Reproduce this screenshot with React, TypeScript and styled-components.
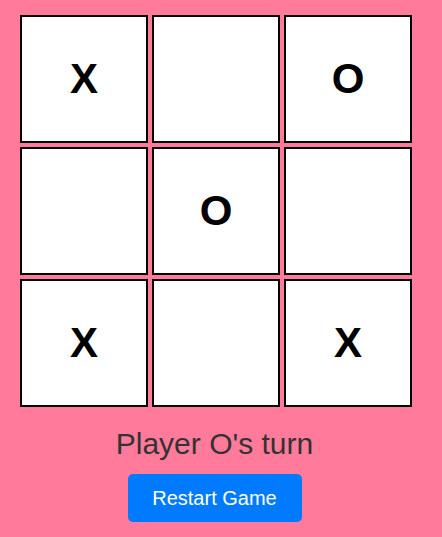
import styled, { createGlobalStyle } from "styled-components";
import { useState } from "react";

const GlobalStyle = createGlobalStyle`
  html, body {
    margin: 0;
    padding: 0;
    background-color: #ff7a9b;
    font-family: "Liberation Sans", Arial, sans-serif;
  }
`;

const Page = styled.div`
  min-height: 537px;
  padding: 15px 0 0 20px;
  box-sizing: border-box;
`;

const Game = styled.div`
  width: 392px;
  display: flex;
  flex-direction: column;
  align-items: center;
`;

const Board = styled.div`
  display: grid;
  grid-template-columns: repeat(3, 128px);
  grid-auto-rows: 128px;
  gap: 4px;
`;

const Cell = styled.button`
  box-sizing: border-box;
  width: 128px;
  height: 128px;
  padding: 0;
  background-color: #ffffff;
  border: 2px solid #000000;
  font-family: "Liberation Sans", Arial, sans-serif;
  font-size: 42px;
  font-weight: 700;
  color: #000000;
  cursor: pointer;
  display: flex;
  align-items: center;
  justify-content: center;
`;

const Status = styled.div`
  margin-top: 20px;
  font-size: 30px;
  color: #333333;
  margin-right: 3px;
`;

const RestartButton = styled.button`
  margin-top: 13px;
  margin-right: 3px;
  width: 174px;
  height: 48px;
  border: none;
  border-radius: 5px;
  background-color: #007bff;
  color: #ffffff;
  font-family: "Liberation Sans", Arial, sans-serif;
  font-size: 20px;
  cursor: pointer;
`;

const initialBoard = ["X", "", "O", "", "O", "", "X", "", "X"];

export default function App() {
  const [squares, setSquares] = useState<string[]>(initialBoard);
  const [turn, setTurn] = useState<"X" | "O">("O");

  const handleClick = (index: number) => {
    if (squares[index]) return;
    const next = [...squares];
    next[index] = turn;
    setSquares(next);
    setTurn(turn === "X" ? "O" : "X");
  };

  const restart = () => {
    setSquares(Array(9).fill(""));
    setTurn("X");
  };

  return (
    <>
      <GlobalStyle />
      <Page>
        <Game>
          <Board>
            {squares.map((value, index) => (
              <Cell key={index} onClick={() => handleClick(index)}>
                {value}
              </Cell>
            ))}
          </Board>
          <Status>Player {turn}'s turn</Status>
          <RestartButton onClick={restart}>Restart Game</RestartButton>
        </Game>
      </Page>
    </>
  );
}
